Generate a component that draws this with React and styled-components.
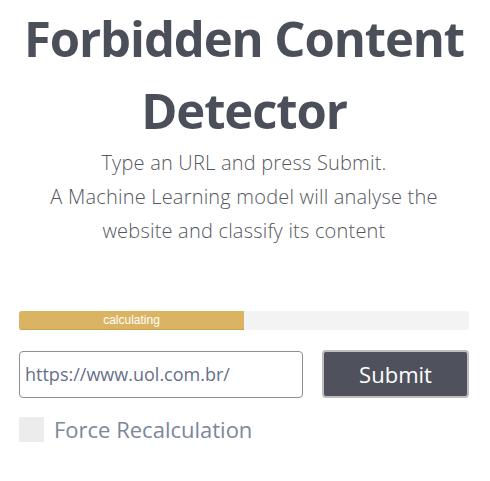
import React from 'react'
import styled, { createGlobalStyle } from 'styled-components'

const GlobalStyle = createGlobalStyle`
  body {
    margin: 0;
    background: #ffffff;
    font-family: "Open Sans", "Noto Sans", sans-serif;
  }
`

const Page = styled.main`
  width: 450px;
  margin: 0 21px 0 19px;
  padding: 2px 0 0;
  display: flex;
  flex-direction: column;
`

const Title = styled.h1`
  margin: 0;
  text-align: center;
  font-size: 49px;
  font-weight: 700;
  line-height: 72px;
  color: #4b4f5a;
  letter-spacing: -1.1px;
`

const Lead = styled.p`
  margin: 0 auto;
  max-width: 420px;
  text-align: center;
  font-size: 20px;
  font-weight: 300;
  line-height: 34px;
  letter-spacing: 0.2px;
  color: #555860;
`

const Progress = styled.div`
  margin-top: 63px;
  height: 19px;
  background: #f3f3f3;
  border-radius: 3px;
  overflow: hidden;
  display: flex;
`

const ProgressFill = styled.div`
  height: 100%;
  background: #dab462;
  border-bottom: 1px solid #c9a24f;
  box-sizing: border-box;
  color: #ffffff;
  font-family: "Liberation Sans", Arial, sans-serif;
  font-size: 12px;
  line-height: 19px;
  text-align: center;
`

const Form = styled.form`
  margin-top: 20px;
  display: flex;
  gap: 19px;
  align-items: center;
`

const UrlInput = styled.input`
  flex: 0 0 284px;
  height: 47px;
  box-sizing: border-box;
  border: 1px solid #8c8f96;
  border-radius: 4px;
  padding: 0 5px;
  font-family: "Open Sans", sans-serif;
  font-size: 18px;
  color: #66708a;
  outline: none;
`

const SubmitButton = styled.button`
  flex: 1;
  height: 48px;
  box-sizing: border-box;
  background: #4f525d;
  border: 2px solid #bdbdbd;
  border-radius: 4px;
  color: #ffffff;
  font-family: "Open Sans", sans-serif;
  font-size: 22px;
  cursor: pointer;
`

const CheckRow = styled.label`
  margin-top: 16px;
  display: flex;
  align-items: center;
  gap: 10px;
  font-size: 22px;
  color: #7b879a;
`

const Box = styled.span`
  width: 25px;
  height: 25px;
  background: #ececec;
`

export default function App() {
  const progress = 50
  return (
    <>
      <GlobalStyle />
      <Page>
        <Title>Forbidden Content Detector</Title>
        <Lead>
          Type an URL and press Submit.
          <br />
          A Machine Learning model will analyse the website and classify its content
        </Lead>
        <Progress>
          <ProgressFill style={{ width: `${progress}%` }}>calculating</ProgressFill>
        </Progress>
        <Form onSubmit={e => e.preventDefault()}>
          <UrlInput defaultValue="https://www.uol.com.br/" />
          <SubmitButton type="submit">Submit</SubmitButton>
        </Form>
        <CheckRow>
          <Box />
          Force Recalculation
        </CheckRow>
      </Page>
    </>
  )
}
